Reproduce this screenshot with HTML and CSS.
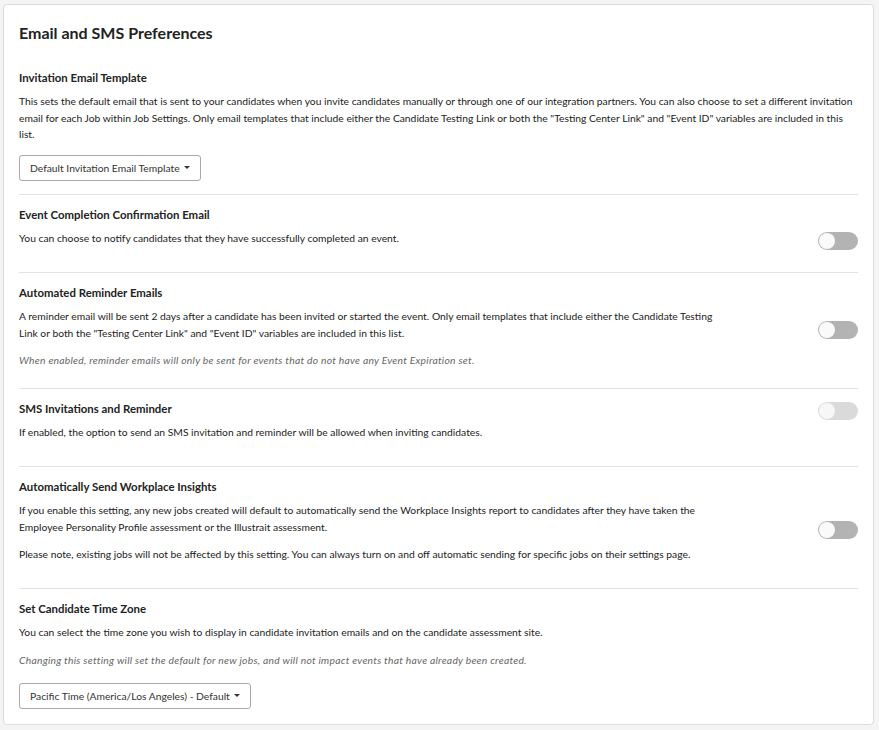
FILE: index.html
```html
<!DOCTYPE html>
<html lang="en">
<head>
<meta charset="utf-8">
<title>Email and SMS Preferences</title>
<link rel="stylesheet" href="styles.css">
</head>
<body>
<div class="card">
  <h1 class="page-title">Email and SMS Preferences</h1>

  <section class="section section--first section--select">
    <h2 class="section-title">Invitation Email Template</h2>
    <p class="text">This sets the default email that is sent to your candidates when you invite candidates manually or through one of our integration partners. You can also choose to set a different invitation email for each Job within Job Settings. Only email templates that include either the Candidate Testing Link or both the "Testing Center Link" and "Event ID" variables are included in this list.</p>
    <button class="dropdown">Default Invitation Email Template<span class="caret"></span></button>
  </section>

  <section class="section">
    <h2 class="section-title">Event Completion Confirmation Email</h2>
    <div class="body">
      <div class="body-text">
        <p class="text">You can choose to notify candidates that they have successfully completed an event.</p>
      </div>
      <span class="toggle"><span class="knob"></span></span>
    </div>
  </section>

  <section class="section">
    <h2 class="section-title">Automated Reminder Emails</h2>
    <div class="body">
      <div class="body-text">
        <p class="text text--gap">A reminder email will be sent 2 days after a candidate has been invited or started the event. Only email templates that include either the Candidate Testing Link or both the "Testing Center Link" and "Event ID" variables are included in this list.</p>
      </div>
      <span class="toggle"><span class="knob"></span></span>
    </div>
    <p class="text note">When enabled, reminder emails will only be sent for events that do not have any Event Expiration set.</p>
  </section>

  <section class="section">
    <div class="title-row">
      <h2 class="section-title">SMS Invitations and Reminder</h2>
      <span class="toggle toggle--disabled"><span class="knob"></span></span>
    </div>
    <p class="text">If enabled, the option to send an SMS invitation and reminder will be allowed when inviting candidates.</p>
  </section>

  <section class="section">
    <h2 class="section-title">Automatically Send Workplace Insights</h2>
    <div class="body">
      <div class="body-text">
        <p class="text text--gap">If you enable this setting, any new jobs created will default to automatically send the Workplace Insights report to candidates after they have taken the Employee Personality Profile assessment or the Illustrait assessment.</p>
        <p class="text">Please note, existing jobs will not be affected by this setting. You can always turn on and off automatic sending for specific jobs on their settings page.</p>
      </div>
      <span class="toggle toggle--raised"><span class="knob"></span></span>
    </div>
  </section>

  <section class="section section--select">
    <h2 class="section-title">Set Candidate Time Zone</h2>
    <p class="text text--gap">You can select the time zone you wish to display in candidate invitation emails and on the candidate assessment site.</p>
    <p class="text note">Changing this setting will set the default for new jobs, and will not impact events that have already been created.</p>
    <button class="dropdown dropdown--tz">Pacific Time (America/Los Angeles) - Default<span class="caret"></span></button>
  </section>
</div>
</body>
</html>
```

FILE: styles.css
```css
html, body {
  margin: 0;
  padding: 0;
}
body {
  background: #f4f4f4;
  font-family: Lato, "Open Sans", "Liberation Sans", sans-serif;
  color: #222;
  padding: 4px 5px 5px 3px;
}
.card {
  background: #fff;
  border: 1px solid #dcdcdc;
  border-radius: 4px;
  padding: 18px 15px 2px 15px;
}
.page-title {
  margin: 0 0 26px 0;
  font-size: 16px;
  line-height: 20px;
  font-weight: 700;
  color: #222;
}
.section {
  padding: 11px 0 19.5px 0;
  border-top: 1px solid #e3e3e3;
}
.section--first {
  border-top: none;
  padding-top: 0;
}
.section--select {
  padding-bottom: 13px;
}
.section-title {
  margin: 0 0 6px 0;
  font-size: 11.4px;
  line-height: 18px;
  font-weight: 700;
  color: #222;
}
.text {
  margin: 0 0 6px 0;
  font-size: 10.3px;
  line-height: 16.5px;
  color: #222;
}
.text--gap {
  margin-bottom: 11px;
}
.section--first .text {
  margin-bottom: 12.5px;
  max-width: 836px;
}
.note {
  font-style: italic;
  color: #666;
  margin-bottom: 0;
  letter-spacing: 0.26px;
}
.body {
  display: flex;
  align-items: center;
  justify-content: space-between;
}
.body-text {
  max-width: 700px;
}
.title-row {
  display: flex;
  align-items: flex-start;
  justify-content: space-between;
  margin-bottom: 6px;
}
.title-row .section-title {
  margin: 0;
}
.toggle {
  flex: none;
  position: relative;
  display: block;
  width: 40px;
  height: 18px;
  border-radius: 9px;
  background: #b3b3b3;
}
.toggle .knob {
  position: absolute;
  left: 1px;
  top: 1px;
  width: 16px;
  height: 16px;
  border-radius: 50%;
  background: #fafafa;
}
.toggle--disabled {
  background: #dadada;
  margin-top: 2px;
  margin-bottom: -2px;
}
.toggle--disabled .knob {
  background: #f7f7f7;
}
.toggle--raised {
  margin-bottom: 10px;
}
.dropdown {
  display: inline-flex;
  align-items: center;
  height: 26px;
  padding: 0 10px;
  border: 1px solid #a9a9a9;
  border-radius: 3px;
  background: #fff;
  font-family: Lato, "Open Sans", "Liberation Sans", sans-serif;
  font-size: 10.3px;
  color: #333;
  cursor: pointer;
  margin: 0;
}
.dropdown--tz {
  margin-top: 15px;
}
.caret {
  display: inline-block;
  width: 0;
  height: 0;
  margin-left: 4px;
  border-left: 3px solid transparent;
  border-right: 3px solid transparent;
  border-top: 3px solid #333;
  position: relative;
  top: -1px;
}
```
